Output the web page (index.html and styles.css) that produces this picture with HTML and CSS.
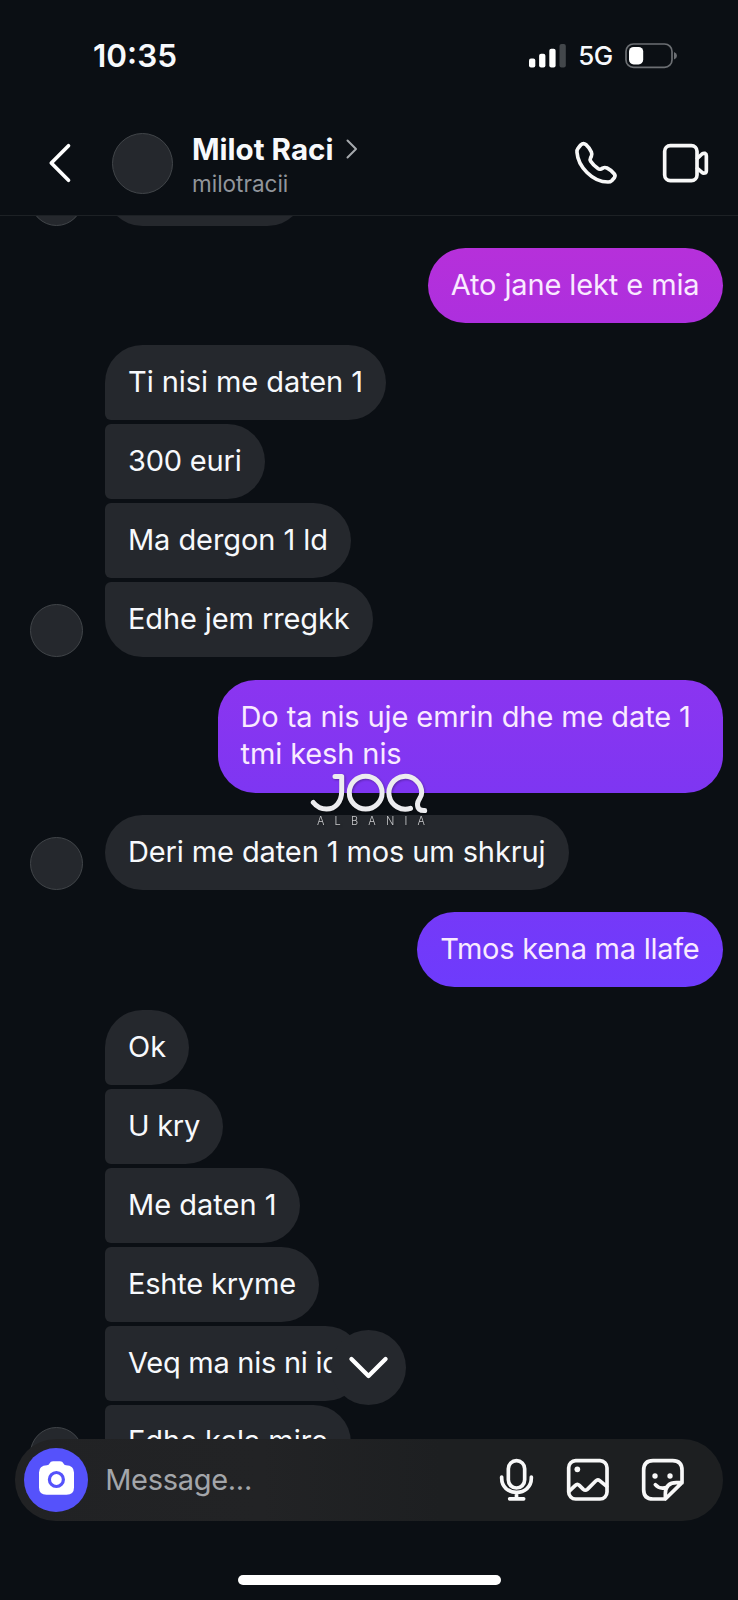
FILE: index.html
```html
<!DOCTYPE html>
<html lang="sq">
<head>
<meta charset="utf-8">
<title>Milot Raci</title>
<link rel="stylesheet" href="styles.css">
</head>
<body>
<div class="phone">
  <div class="status">
    <span class="clock">10:35</span>
    <div class="status-right">
      <svg class="signal" viewBox="0 0 37 24"><rect x="0" y="14.5" width="6.3" height="9" rx="2"/><rect x="10.1" y="9.8" width="6.3" height="13.7" rx="2"/><rect x="20.3" y="4.8" width="6.3" height="18.7" rx="2"/><rect class="dim" x="30.5" y="0" width="6.3" height="23.5" rx="2"/></svg>
      <span class="network">5G</span>
      <svg class="battery" viewBox="0 0 53 26"><rect class="case" x="1" y="1" width="46" height="23.4" rx="7.5"/><rect class="level" x="4" y="4" width="14.2" height="17.4" rx="4.6"/><path class="nub" d="M49 9q3 1.200 3 3.700t-3 3.700z"/></svg>
    </div>
  </div>

  <header class="header">
    <svg class="back" viewBox="0 0 22 40"><path d="M19.500 2.800L2.300 20l17.200 17.200"/></svg>
    <span class="avatar avatar-lg"></span>
    <div class="who">
      <div class="name-row">
        <h1 class="name">Milot Raci</h1>
        <svg class="more" viewBox="0 0 12 20"><path d="M1.500 1.500L10 10l-8.500 8.500"/></svg>
      </div>
      <div class="handle">milotracii</div>
    </div>
    <svg class="line call" viewBox="43 67 125 125"><path d="M60 76L52 86Q48 91 49 98C52 140 95 187 142 187Q149 187 153 183L161 174Q165 168 161 163Q150 150 139 145Q132 142 127 145L121 148Q116 150 111 146Q97 136 90 125Q87 120 90 114L92 110Q95 104 92 97Q86 84 76 75Q68 68 60 76Z"/></svg>
    <svg class="line video" viewBox="308 72 137 116"><rect x="313" y="77" width="97" height="105" rx="17"/><path d="M411 115L425 102Q429 99 434 100Q438 102 438 107V152Q438 158 433 159Q428 160 425 157L411 145"/></svg>
  </header>

  <main class="chat">
    <div class="group first">
      <span class="avatar avatar-sm"></span>
      <div class="stack"><p class="bubble blank"></p></div>
    </div>
    <p class="bubble sent tone-a t1">Ato jane lekt e mia</p>
    <div class="group">
      <span class="avatar avatar-sm"></span>
      <div class="stack">
        <p class="bubble t0">Ti nisi me daten 1</p>
        <p class="bubble t2">300 euri</p>
        <p class="bubble t0">Ma dergon 1 ld</p>
        <p class="bubble t1">Edhe jem rregkk</p>
      </div>
    </div>
    <p class="bubble sent tone-b t1">Do ta nis uje emrin dhe me date 1<br>tmi kesh nis</p>
    <div class="group">
      <span class="avatar avatar-sm"></span>
      <div class="stack"><p class="bubble t1">Deri me daten 1 mos um shkruj</p></div>
    </div>
    <p class="bubble sent tone-c t3">Tmos kena ma llafe</p>
    <div class="group">
      <span class="avatar avatar-sm"></span>
      <div class="stack">
        <p class="bubble">Ok</p>
        <p class="bubble t3">U kry</p>
        <p class="bubble">Me daten 1</p>
        <p class="bubble t2">Eshte kryme</p>
        <p class="bubble t3">Veq ma nis ni id</p>
        <p class="bubble t0">Edhe kala mire</p>
      </div>
    </div>
  </main>

  <div class="watermark">
    <svg class="mark" viewBox="311 773 117 41"><path d="M335 776.500H341.700V791C341.700 802.500 335 809 326.500 809C321 809 316.500 806.500 313.300 802.500"/><circle cx="365.700" cy="792.700" r="16.400"/><path d="M410.500 808.300A16.400 16.400 0 1 1 421.700 792.700C421.700 798 417.800 799 417.500 804C417.400 809 420 810.800 424.700 810.600"/></svg>
    <div class="mark-text">ALBANIA</div>
  </div>

  <button class="jump" aria-label="Scroll down"><svg viewBox="0 0 40 24"><path d="M2.500 3L20 20.500L37.500 3"/></svg></button>

  <div class="composer">
    <span class="camera"><svg viewBox="0 0 35 34"><path class="body" d="M8 4.200Q10 4 10.500 2.500Q11.500 .3 14 .3H21Q23.500 .3 24.500 2.500Q25 4 27 4.200Q35 4.500 35 11.500V26.500Q35 33.700 27.500 33.700H7.500Q0 33.700 0 26.500V11.500Q0 4.500 8 4.200Z"/><circle class="ring" cx="17.400" cy="18.500" r="7"/></svg></span>
    <span class="placeholder">Message...</span>
    <svg class="line mic" viewBox="30 42 99 125"><rect x="55" y="47" width="49" height="82" rx="24.500"/><path d="M35 96v3C35 126 55 142 79.500 142S124 126 124 99v-3M79.500 143V160M59 161.500H101"/></svg>
    <svg class="line photo" viewBox="231 42 125 125"><rect x="236" y="47" width="115" height="115" rx="21"/><circle class="dot" cx="262" cy="73" r="8.500"/><path d="M237 139L256 121Q262 115 268 121L280 133Q286 138 292 133L317 108Q323 102 329 107L350 124"/></svg>
    <svg class="line sticker" viewBox="457 42 125 125"><path d="M527 162H490Q462 162 462 134V76Q462 47 490 47H549Q577 47 577 76V113L527 162V146Q528 113 560 113H577M497 119Q509 134 532 127"/><circle class="dot" cx="496" cy="93" r="8"/><circle class="dot" cx="541" cy="93" r="8"/></svg>
  </div>
  <div class="home"></div>
</div>
</body>
</html>
```
FILE: styles.css
```css
* { box-sizing: border-box; }

body {
  margin: 0;
  background: #0b0f14;
  color: #f7f9fc;
  font-family: Inter, "Liberation Sans", sans-serif;
}

h1, p { margin: 0; }

svg { display: block; flex: none; overflow: visible; }

.phone {
  position: relative;
  display: flex;
  flex-direction: column;
  width: 738px;
  height: 1600px;
  overflow: hidden;
  background: #0b0f14;
}

/* Status bar */
.status {
  display: flex;
  justify-content: space-between;
  align-items: center;
  height: 111px;
  padding: 0 60px 0 93px;
}

.clock { font-size: 31.500px; font-weight: 600; line-height: 40px; }
.status-right { display: flex; align-items: center; }
.signal { width: 37px; height: 24px; fill: #fff; }
.signal .dim { fill: #43474b; }
.network { margin: 1px 12.500px 0 12px; font-size: 26px; font-weight: 500; line-height: 32px; letter-spacing: -.6px; }
.battery { width: 53px; height: 26px; }
.battery .case { fill: none; stroke: #6c6f73; stroke-width: 1.7; }
.battery .level { fill: #fff; }
.battery .nub { fill: #6c6f73; }

/* Conversation header */
.header {
  display: flex;
  align-items: center;
  height: 105px;
  padding: 0 29px 0 48.500px;
  border-bottom: 1px solid #1d2125;
}

.back { width: 22px; height: 40px; fill: none; stroke: #fff; stroke-width: 3.7; stroke-linecap: round; stroke-linejoin: round; }

.avatar {
  flex: none;
  border: 1px solid #414549;
  border-radius: 50%;
  background: #25282d;
}

.avatar-lg { width: 61px; height: 61px; margin-left: 41.500px; }
.avatar-sm { width: 53px; height: 53px; }

.who { flex: 1; margin-left: 19px; padding-top: 4px; }
.name-row { display: flex; align-items: center; gap: 12px; }
.name { font-size: 29.600px; font-weight: 700; line-height: 36px; }
.more { width: 12px; height: 20px; fill: none; stroke: #a6a9ad; stroke-width: 2; stroke-linecap: round; stroke-linejoin: round; }
.handle { color: #91959b; font-size: 22.500px; line-height: 33px; }

.line { fill: none; stroke: #f8f8f8; stroke-width: 11; stroke-linecap: round; stroke-linejoin: round; }
.line .dot { fill: #f8f8f8; stroke: none; }
.call { width: 41.700px; height: 41.700px; margin-right: 46.500px; }
.video { width: 45.700px; height: 38.700px; }

/* Messages */
.chat {
  display: flex;
  flex: 1;
  flex-direction: column;
  gap: 22.300px;
  min-height: 0;
  overflow: hidden;
  padding: 0 15.300px 0 29.700px;
}

.group { display: flex; flex: none; align-items: flex-end; gap: 22.500px; }
.first { margin-top: -65.700px; }
.stack { display: flex; flex-direction: column; align-items: flex-start; gap: 3.800px; }

.bubble {
  flex: none;
  padding: 17.800px 23.200px 19.800px 22.800px;
  border-radius: 6px 37.600px 37.600px 6px;
  background: #25282d;
  font-size: 29px;
  line-height: 37.600px;
  white-space: nowrap;
}

.bubble:first-child { border-top-left-radius: 37.600px; }
.bubble:last-child { border-bottom-left-radius: 37.600px; }
.blank { width: 200px; height: 75.200px; }

.chat > .sent { align-self: flex-end; border-radius: 37.600px; color: #f9eaff; }
.tone-a { background: linear-gradient(#b630da, #ad2fde); }
.tone-b { width: 505px; background: linear-gradient(#8b35f0, #7e36f2); }
.tone-c { background: linear-gradient(#7539f8, #6e3bfc); }

.t0 { letter-spacing: -.07px; }
.t1 { letter-spacing: -.11px; }
.t2 { letter-spacing: -.2px; }
.t3 { letter-spacing: -.26px; }

/* Logo laid over the conversation */
.watermark { position: absolute; left: 311px; top: 773px; width: 117px; filter: drop-shadow(1px 1px 1px rgba(0, 0, 0, .3)); }
.mark { width: 117px; height: 41px; fill: none; stroke: #ececef; stroke-width: 5; stroke-linecap: round; stroke-linejoin: round; }
.mark-text { padding-left: 6px; color: #c9cacc; font-size: 11px; font-weight: 300; line-height: 14px; letter-spacing: 10.200px; white-space: nowrap; }

.jump {
  position: absolute;
  left: 331px;
  top: 1329.500px;
  display: flex;
  align-items: center;
  justify-content: center;
  width: 75px;
  height: 75px;
  padding: 2px 0 0;
  border: 0;
  border-radius: 50%;
  background: #25282d;
}

.jump svg { width: 39px; height: 23.500px; fill: none; stroke: #fff; stroke-width: 4.4; stroke-linecap: round; stroke-linejoin: round; }

/* Message input */
.composer {
  position: absolute;
  left: 15px;
  top: 1439px;
  display: flex;
  align-items: center;
  width: 708px;
  height: 81.700px;
  padding: 0 39px 0 9px;
  border-radius: 41px;
  background: linear-gradient(90deg, #212224, #222325 35%, #1d1f21 60%);
}

.camera { display: flex; flex: none; align-items: center; justify-content: center; width: 64px; height: 64px; border-radius: 50%; background: #5552fb; }
.camera svg { width: 35px; height: 34px; margin-top: -4px; }
.camera .body { fill: #fff; }
.camera .ring { fill: none; stroke: #5552fb; stroke-width: 3.2; }
.placeholder { flex: 1; margin-left: 17.200px; color: #a3a6aa; font-size: 29px; line-height: 38px; letter-spacing: -.3px; }
.mic { width: 33px; height: 41.700px; margin-right: 34px; }
.photo { width: 41.700px; height: 41.700px; margin-right: 33.500px; }
.sticker { width: 41.700px; height: 41.700px; }

.home { position: absolute; left: 238px; top: 1575px; width: 263px; height: 10px; border-radius: 5px; background: #fff; }
```
